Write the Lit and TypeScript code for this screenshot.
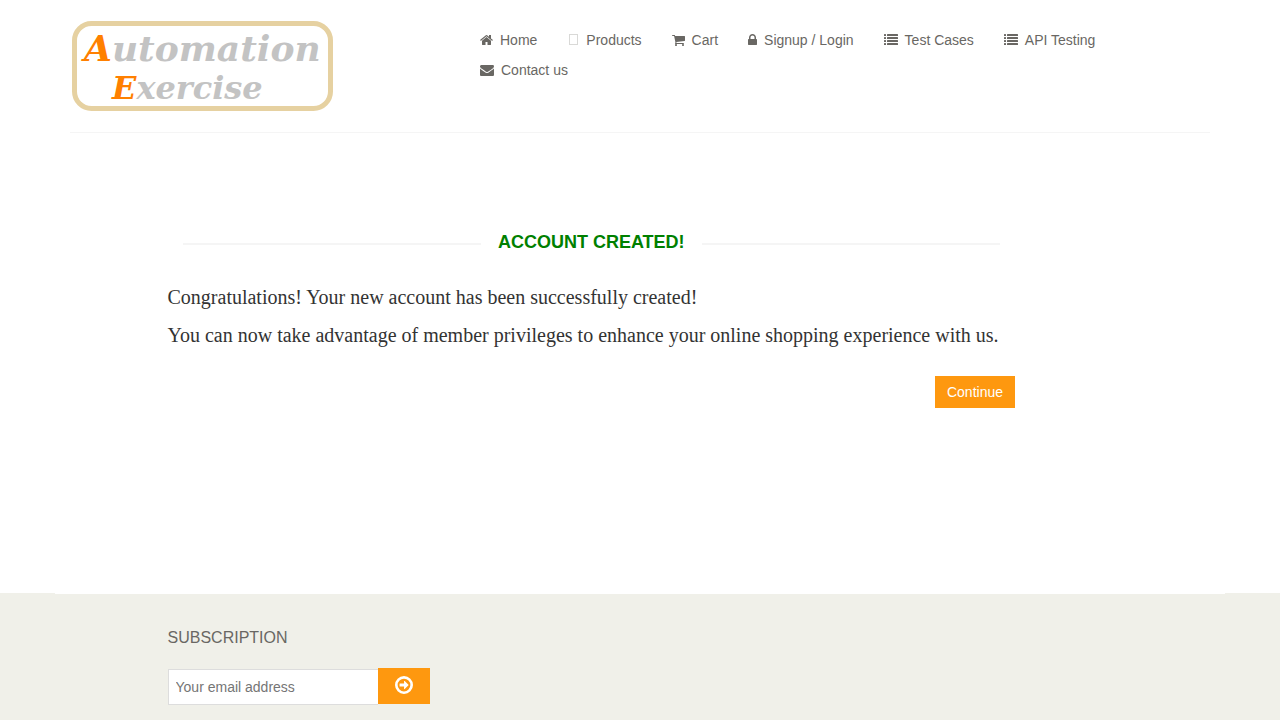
import { LitElement, html, svg, css } from "lit";
import { customElement } from "lit/decorators.js";

const listRows = [128, 512, 896, 1280];

const icons = {
  home: {
    box: "0 0 1664 1792",
    size: 13,
    art: svg`<path d="M1408 992v480q0 26-19 45t-45 19h-384v-384h-256v384h-384q-26 0-45-19t-19-45v-480q0-1 .5-3t.5-3l575-474 575 474q1 2 1 6zm223-69l-62 74q-8 9-21 11h-3q-13 0-21-7l-692-577-692 577q-12 8-24 7-13-2-21-11l-62-74q-8-10-7-23.5t11-21.5l719-599q32-26 76-26t76 26l244 204v-195q0-14 9-23t23-9h192q14 0 23 9t9 23v408l219 182q10 8 11 21.5t-7 23.5z"/>`,
  },
  products: {
    box: "0 0 12 14",
    size: 12,
    art: svg`<rect x="2.5" y="1.5" width="8" height="10" fill="none" stroke="#d9d9d7"/>`,
  },
  cart: {
    box: "64 0 1664 1792",
    size: 13,
    art: svg`<path d="M704 1536q0 52-38 90t-90 38-90-38-38-90 38-90 90-38 90 38 38 90zm896 0q0 52-38 90t-90 38-90-38-38-90 38-90 90-38 90 38 38 90zm128-1088v512q0 24-16.5 42.5t-40.5 21.5l-1044 122q13 60 13 70 0 16-24 64h920q26 0 45 19t19 45-19 45-45 19h-1024q-26 0-45-19t-19-45q0-11 8-31.5t16-36 21.5-40 15.5-29.5l-177-823h-204q-26 0-45-19t-19-45 19-45 45-19h256q16 0 28.5 6.5t19.5 15.5 13 24.5 8 26 5.5 29.5 4.5 26h1201q26 0 45 19t19 45z"/>`,
  },
  lock: {
    box: "320 0 1152 1792",
    size: 9,
    art: svg`<path d="M640 768h512v-192q0-106-75-181t-181-75-181 75-75 181v192zm832 96v576q0 40-28 68t-68 28h-960q-40 0-68-28t-28-68v-576q0-40 28-68t68-28h32v-192q0-184 132-316t316-132 316 132 132 316v192h32q40 0 68 28t28 68z"/>`,
  },
  list: {
    box: "0 0 1792 1792",
    size: 14,
    art: svg`${listRows.map(
      (y) => svg`<rect x="0" y=${y} width="256" height="256" rx="32"/><rect x="384" y=${y} width="1408" height="256" rx="32"/>`
    )}`,
  },
  envelope: {
    box: "0 0 1792 1792",
    size: 14,
    art: svg`<path d="M1792 710v794q0 66-47 113t-113 47h-1472q-66 0-113-47t-47-113v-794q44 49 101 87 362 246 497 345 57 42 92.5 65.5t94.5 48 110 24.5h2q51 0 110-24.5t94.5-48 92.5-65.5q170-123 498-345 57-39 100-87zm0-294q0 79-49 151t-122 123q-376 261-468 325-10 7-42.5 31t-54 38.5-52 32.5-57.5 27-50 9h-2q-23 0-50-9t-57.5-27-52-32.5-54-38.5-42.5-31q-91-64-262-182.5t-205-142.5q-62-42-117-115.5t-55-136.5q0-78 41.5-130t118.5-52h1472q65 0 112.5 47t47.5 113z"/>`,
  },
};

const links: { icon: keyof typeof icons; label: string }[] = [
  { icon: "home", label: "Home" },
  { icon: "products", label: "Products" },
  { icon: "cart", label: "Cart" },
  { icon: "lock", label: "Signup / Login" },
  { icon: "list", label: "Test Cases" },
  { icon: "list", label: "API Testing" },
  { icon: "envelope", label: "Contact us" },
];

@customElement("site-header")
class SiteHeader extends LitElement {
  static styles = css`
    :host {
      display: block;
      max-width: 1140px;
      margin: 0 auto;
      border-bottom: 1px solid #f5f5f5;
    }
    .row {
      display: flex;
      padding: 20px 0;
    }
    .brand {
      flex: 0 0 410px;
      padding-left: 2px;
      box-sizing: border-box;
      text-decoration: none;
    }
    .logo {
      display: block;
      width: 262px;
      height: 92px;
      font-family: "DejaVu Serif", serif;
      font-style: italic;
      font-weight: 700;
    }
    .links {
      display: flex;
      flex-wrap: wrap;
      align-content: flex-start;
      column-gap: 30px;
      margin: 0;
      padding: 5px 15px 0 0;
      list-style: none;
    }
    .link {
      display: flex;
      align-items: center;
      gap: 7px;
      height: 30px;
      color: #696763;
      font: 14px/20px "Liberation Sans", Arial, sans-serif;
      text-decoration: none;
    }
    .icon {
      height: 14px;
      fill: currentColor;
    }
  `;

  render() {
    return html`
      <header class="row">
        <a class="brand" href="#" aria-label="Automation Exercise">
          <svg class="logo" viewBox="0 0 262 92">
            <rect x="2.5" y="3.5" width="256" height="85" rx="17" fill="#fff" stroke="#e6d1a1" stroke-width="5" />
            <text x="12" y="41" font-size="36" fill="#c3c3c3"><tspan fill="#ff8000">A</tspan>utomation</text>
            <text x="40" y="79" font-size="32" fill="#c3c3c3"><tspan fill="#ff8000">E</tspan>xercise</text>
          </svg>
        </a>
        <nav>
          <ul class="links">
            ${links.map(({ icon, label }) => {
              const { box, size, art } = icons[icon];
              return html`<li>
                <a class="link" href="#"><svg class="icon" width=${size} viewBox=${box} aria-hidden="true">${art}</svg>${label}</a>
              </li>`;
            })}
          </ul>
        </nav>
      </header>
    `;
  }
}

@customElement("account-created")
class AccountCreated extends LitElement {
  static styles = css`
    :host {
      display: block;
      width: 100%;
      max-width: 1170px;
      margin: 0 auto;
    }
    .column {
      box-sizing: border-box;
      width: 75%;
      margin-left: calc(100% / 12);
      padding: 98px 15px 185px;
    }
    .title {
      display: flex;
      align-items: center;
      gap: 17px;
      margin: 0 15px 30px;
      color: green;
      font: 700 18px/22px "Liberation Sans", Arial, sans-serif;
      text-transform: uppercase;
    }
    .title::before,
    .title::after {
      content: "";
      flex: 1;
      height: 2px;
      margin-top: 4px;
      background: #f5f5f5;
    }
    .text {
      margin: 0 0 10px;
      color: #333;
      font: 20px/28px "Liberation Serif", "Times New Roman", serif;
    }
    .actions {
      display: flex;
      justify-content: flex-end;
      padding-top: 17px;
    }
    .continue {
      padding: 6px 12px;
      background: #fe980f;
      color: #fff;
      font: 14px/20px "Liberation Sans", Arial, sans-serif;
      text-decoration: none;
    }
  `;

  render() {
    return html`
      <section class="column">
        <h2 class="title">Account Created!</h2>
        <p class="text">Congratulations! Your new account has been successfully created!</p>
        <p class="text">You can now take advantage of member privileges to enhance your online shopping experience with us.</p>
        <div class="actions"><a class="continue" href="#">Continue</a></div>
      </section>
    `;
  }
}

@customElement("site-footer")
class SiteFooter extends LitElement {
  static styles = css`
    :host {
      display: block;
      background: #f0f0e9;
    }
    .container {
      max-width: 1170px;
      margin: 0 auto;
      border-top: 1px solid #fff;
    }
    .column {
      margin-left: calc(100% / 12);
      padding: 34px 15px 15px;
    }
    .heading {
      display: block;
      margin-bottom: 20px;
      color: #696763;
      font: 16px/20px "Liberation Sans", Arial, sans-serif;
      text-transform: uppercase;
    }
    .form {
      display: flex;
    }
    .email {
      box-sizing: border-box;
      width: 210px;
      height: 36px;
      margin: 1px 0 0;
      padding: 0 7px;
      border: 1px solid #ddd;
      border-right: 0;
      border-radius: 0;
      outline: 0;
      background: #fff;
      font: 14px/20px "Liberation Sans", Arial, sans-serif;
    }
    .email::placeholder {
      color: #757575;
    }
    .submit {
      display: grid;
      align-content: start;
      justify-content: center;
      width: 52px;
      height: 36px;
      padding: 8px 0 0;
      border: 0;
      background: #fe980f;
    }
    .arrow {
      display: block;
      width: 18px;
      height: 18px;
    }
  `;

  render() {
    return html`
      <footer class="container">
        <div class="column">
          <label class="heading" for="email">Subscription</label>
          <form class="form" @submit=${(e: Event) => e.preventDefault()}>
            <input class="email" id="email" type="email" placeholder="Your email address" />
            <button class="submit" type="submit" aria-label="Subscribe">
              <svg class="arrow" viewBox="0 0 1536 1536">
                <circle cx="768" cy="768" r="656" fill="none" stroke="#fff" stroke-width="224" />
                <path fill="#fff" d="M1157 768q0 14-9 23l-320 320q-9 9-23 9-13 0-22.500-9.500t-9.500-22.500v-192h-352q-13 0-22.500-9.500t-9.500-22.500v-192q0-13 9.500-22.500t22.500-9.500h352v-192q0-14 9-23t23-9q12 0 24 10l319 319q9 9 9 23z" />
              </svg>
            </button>
          </form>
        </div>
      </footer>
    `;
  }
}

@customElement("app-root")
class AppRoot extends LitElement {
  static styles = css`
    :host {
      display: flex;
      flex-direction: column;
      min-height: 100vh;
      background: #fff;
    }
    .header {
      width: 100%;
    }
    .footer {
      flex: 1;
    }
  `;

  render() {
    return html`
      <site-header class="header"></site-header>
      <main><account-created></account-created></main>
      <site-footer class="footer"></site-footer>
    `;
  }
}
